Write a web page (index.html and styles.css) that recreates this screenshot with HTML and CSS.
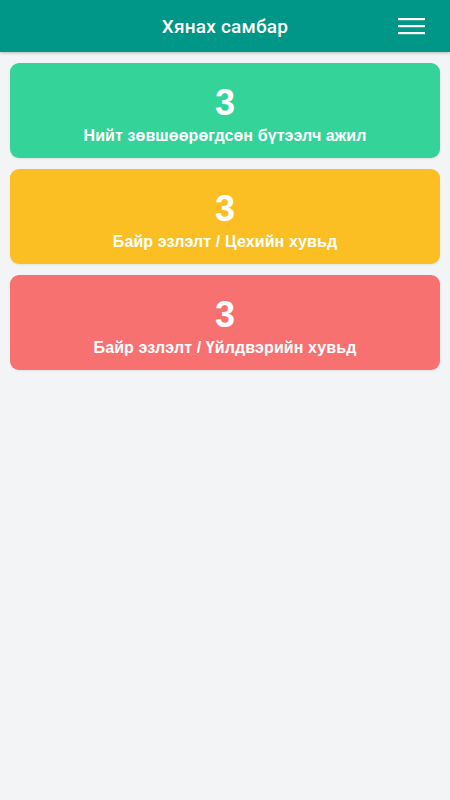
FILE: index.html
```html
<!DOCTYPE html>
<html lang="mn">
<head>
<meta charset="utf-8">
<title>Хянах самбар</title>
<link rel="stylesheet" href="styles.css">
</head>
<body>
<header class="topbar">
  <span class="spacer"></span>
  <h1 class="title">Хянах самбар</h1>
  <button class="menu" aria-label="Цэс">
    <svg width="27" height="17" viewBox="0 0 27 17">
      <rect x="0" y="0" width="27" height="2.2" fill="#fff"/>
      <rect x="0" y="7" width="27" height="2.2" fill="#fff"/>
      <rect x="0" y="14" width="27" height="2.2" fill="#fff"/>
    </svg>
  </button>
</header>
<main class="cards">
  <div class="card card-green">
    <div class="num">3</div>
    <div class="label">Нийт зөвшөөрөгдсөн бүтээлч ажил</div>
  </div>
  <div class="card card-yellow">
    <div class="num">3</div>
    <div class="label">Байр эзлэлт / Цехийн хувьд</div>
  </div>
  <div class="card card-red">
    <div class="num">3</div>
    <div class="label">Байр эзлэлт / Үйлдвэрийн хувьд</div>
  </div>
</main>
</body>
</html>
```
FILE: styles.css
```css
* { box-sizing: border-box; }
html, body { margin: 0; padding: 0; }
body {
  background: #f3f4f6;
  font-family: "Liberation Sans", Arial, sans-serif;
  width: 450px;
  min-height: 800px;
}
.topbar {
  height: 52px;
  background: #009688;
  display: grid;
  grid-template-columns: 1fr auto 1fr;
  align-items: center;
  box-shadow: 0 1px 3px rgba(0,0,0,0.25);
}
.title {
  margin: 0;
  color: #fff;
  font-family: Roboto, "Liberation Sans", sans-serif;
  font-weight: 500;
  font-size: 19px;
  letter-spacing: 0.2px;
  line-height: 24px;
  padding-top: 1px;
}
.menu {
  justify-self: end;
  margin-right: 25px;
  background: none;
  border: 0;
  padding: 0;
  display: flex;
  height: 17px;
  margin-top: 1px;
}
.cards {
  padding: 11px 10px;
  display: flex;
  flex-direction: column;
  gap: 11px;
}
.card {
  border-radius: 9px;
  padding: 20px 16px 12px;
  color: #fff;
  text-align: center;
  box-shadow: 0 1px 2px rgba(0,0,0,0.08);
}
.card-green { background: #34d399; }
.card-yellow { background: #fbbf24; }
.card-red { background: #f87171; }
.num {
  font-size: 36px;
  font-weight: 700;
  line-height: 40px;
}
.label {
  margin-top: 3px;
  font-size: 16px;
  font-weight: 700;
  line-height: 20px;
  letter-spacing: 0.1px;
}
```
